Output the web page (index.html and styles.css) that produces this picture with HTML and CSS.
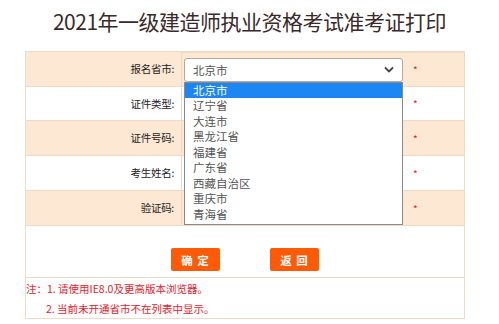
FILE: index.html
```html
<!DOCTYPE html>
<html lang="zh-CN">
<head>
    <meta charset="UTF-8">
    <title>2021年一级建造师执业资格考试准考证打印</title>
    <link rel="stylesheet" href="styles.css">
</head>
<body>
    <h1 class="title">2021年一级建造师执业资格考试准考证打印</h1>

    <table class="form-table">
        <tr class="row-alt">
            <td class="label">报名省市:</td>
            <td class="field">
                <div class="select-wrap">
                    <div class="select">
                        <span>北京市</span>
                        <svg class="chevron" width="10" height="7" viewBox="0 0 10 7"><path d="M1 1.5 L5 5.5 L9 1.5" fill="none" stroke="#444" stroke-width="1.8"/></svg>
                    </div>
                    <ul class="options">
                        <li class="active">北京市</li>
                        <li>辽宁省</li>
                        <li>大连市</li>
                        <li>黑龙江省</li>
                        <li>福建省</li>
                        <li>广东省</li>
                        <li>西藏自治区</li>
                        <li>重庆市</li>
                        <li>青海省</li>
                    </ul>
                </div>
                <span class="req">*</span>
            </td>
        </tr>
        <tr>
            <td class="label">证件类型:</td>
            <td class="field"><span class="spacer"></span><span class="req">*</span></td>
        </tr>
        <tr class="row-alt">
            <td class="label">证件号码:</td>
            <td class="field"><span class="spacer"></span><span class="req">*</span></td>
        </tr>
        <tr>
            <td class="label">考生姓名:</td>
            <td class="field"><span class="spacer"></span><span class="req">*</span></td>
        </tr>
        <tr class="row-alt">
            <td class="label">验证码:</td>
            <td class="field"><span class="spacer"></span><span class="req">*</span></td>
        </tr>
        <tr class="row-buttons">
            <td colspan="2">
                <div class="buttons">
                    <button class="btn">确 定</button>
                    <button class="btn">返 回</button>
                </div>
            </td>
        </tr>
        <tr class="row-notes">
            <td colspan="2">
                <p class="note">注：1. 请使用IE8.0及更高版本浏览器。</p>
                <p class="note indent">2. 当前未开通省市不在列表中显示。</p>
            </td>
        </tr>
    </table>
</body>
</html>
```

FILE: styles.css
```css
body {
    margin: 0;
    background: #fff;
    font-family: "Noto Sans CJK SC", "Noto Sans", sans-serif;
    color: #333;
}

.title {
    margin: 0;
    padding-top: 6px;
    height: 45px;
    font-size: 21px;
    font-weight: normal;
    color: #3a2a2a;
    text-align: center;
    line-height: 30px;
    letter-spacing: -0.5px;
}

.form-table {
    margin-left: 25px;
    width: 440px;
    border-collapse: collapse;
    border: 1px solid #f1d9c8;
}

.form-table td {
    padding: 0;
    border-top: 1px solid #f1d9c8;
}

.row-alt {
    background: #fde8d3;
}

.label {
    width: 148px;
    height: 33px;
    padding-right: 7px !important;
    text-align: right;
    font-size: 10.5px;
    color: #222;
    letter-spacing: -0.3px;
    border-right: 1px solid #f1d9c8;
}

.form-table tr:nth-child(3) .label,
.form-table tr:nth-child(4) .label,
.form-table tr:nth-child(5) .label {
    height: 34px;
}

.field {
    display: flex;
    align-items: center;
    height: 33px;
    padding-left: 2px !important;
}

.form-table tr:nth-child(3) .field,
.form-table tr:nth-child(4) .field,
.form-table tr:nth-child(5) .field {
    height: 34px;
}

.select-wrap {
    position: relative;
    width: 219px;
}

.select {
    display: flex;
    align-items: center;
    justify-content: space-between;
    height: 22px;
    padding: 0 8px 0 8px;
    background: #fff;
    border: 1px solid #b5a99c;
    border-radius: 3px;
    font-size: 11.5px;
    color: #555;
}

.options {
    position: absolute;
    top: 24px;
    left: 0;
    z-index: 2;
    width: 217px;
    margin: 0;
    padding: 0 0 2px;
    list-style: none;
    background: #fff;
    border: 1px solid #8a8a8a;
}

.options li {
    height: 15.5px;
    line-height: 15.5px;
    padding-left: 8px;
    font-size: 11.5px;
    color: #555;
}

.options li.active {
    background: #1c86f2;
    color: #fff;
}

.spacer {
    width: 219px;
}

.req {
    margin-left: 10px;
    color: #e8202a;
    font-size: 10px;
}

.row-buttons td {
    height: 51px;
    vertical-align: top;
}

.buttons {
    display: flex;
    justify-content: center;
    gap: 50px;
    padding-top: 22px;
}

.btn {
    width: 49px;
    height: 23px;
    border: none;
    border-radius: 2px;
    background: #ff5a06;
    color: #fff;
    font-family: "Noto Sans CJK SC", sans-serif;
    font-size: 11.5px;
    font-weight: bold;
    letter-spacing: 1px;
    cursor: pointer;
}

.row-notes td {
    height: 40px;
    vertical-align: top;
}

.note {
    margin: 3px 0 0;
    font-size: 10.5px;
    line-height: 16px;
    color: #e8202a;
}

.note.indent {
    margin-top: 4px;
    padding-left: 20px;
}
```
